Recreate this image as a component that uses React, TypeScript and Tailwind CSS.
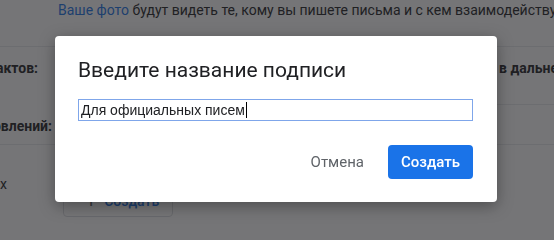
export default function App() {
  return (
    <div className="relative h-[240px] w-[554px] overflow-hidden bg-white font-['Roboto',sans-serif] text-[14px] text-[#202124]">
      {/* settings page behind the dialog */}
      <div className="flex flex-col">
        <div className="h-[47px] whitespace-nowrap border-b border-[#e8eaed] pl-[58px] leading-5">
          <span className="text-[#1a73e8]">Ваше фото</span> будут видеть те, кому вы пишете письма и с кем
          взаимодействуете
        </div>

        <div className="flex h-[98px] border-b border-[#e8eaed]">
          <div className="flex w-[56px] shrink-0 flex-col font-bold leading-5">
            <div className="mt-[11px] flex justify-end overflow-hidden pr-[18px]">
              <span className="shrink-0 whitespace-nowrap">Создание контактов:</span>
            </div>
            <div className="mt-[38px] flex justify-end overflow-hidden pr-[4px]">
              <span className="shrink-0 whitespace-nowrap">Настройки обновлений:</span>
            </div>
          </div>
          <div className="flex flex-1 flex-col">
            <div className="h-[58px] border-b border-[#e8eaed] pt-[11px] leading-5">
              <div className="flex whitespace-nowrap">
                <span className="w-[443px] shrink-0" />
                <span className="font-bold">в дальнейшем</span>
              </div>
            </div>
          </div>
        </div>

        <div className="flex h-[95px]">
          <div className="flex w-[56px] shrink-0 flex-col leading-5">
            <div className="mt-[29px] flex justify-end overflow-hidden pr-[49px]">
              <span className="shrink-0 whitespace-nowrap">для всех</span>
            </div>
          </div>
          <div className="flex-1 pt-[41px] pl-[7px]">
            <button className="flex h-[31px] w-[110px] items-center gap-2 rounded border border-[#dadce0] pl-[22px] text-[#1a73e8]">
              <span className="text-[18px] leading-none text-[#5f6368]">+</span>
              <span className="font-medium">Создать</span>
            </button>
          </div>
        </div>
      </div>

      {/* modal */}
      <div className="fixed inset-0 flex items-center justify-center bg-[rgba(32,33,36,0.62)] pr-[2px] pb-[2px]">
        <div className="w-[442px] rounded-[4px] bg-white pt-[20px] pr-[24px] pb-[23px] pl-[23px] shadow-[0_4px_16px_rgba(0,0,0,0.35)]">
          <h2 className="text-[21px] leading-[28px] text-[#202124]">Введите название подписи</h2>
          <div className="mt-[15px] flex h-[22px] items-center border border-[#7fa6ea] pl-[2px] font-['Liberation_Sans',sans-serif] text-[14px] text-[#202124]">
            Для официальных писем
            <span className="ml-px h-[16px] w-px bg-black" />
          </div>
          <div className="mt-[24px] flex items-center justify-end">
            <button className="h-[34px] pr-[24px] pl-[24px] text-[15px] text-[#5f6368]">Отмена</button>
            <button className="h-[34px] w-[85px] rounded-[4px] bg-[#1a73e8] text-[15px] font-medium text-white">
              Создать
            </button>
          </div>
        </div>
      </div>
    </div>
  );
}
